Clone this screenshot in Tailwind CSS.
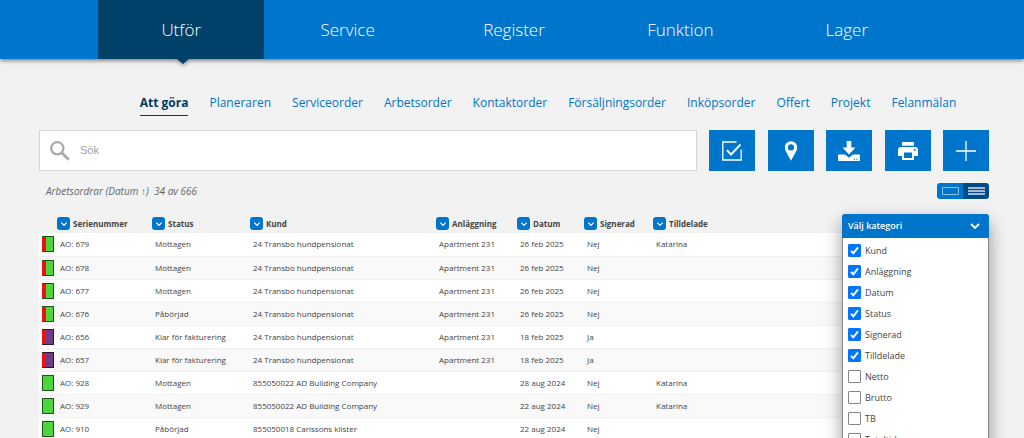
<!DOCTYPE html>
<html lang="sv">
<head>
<meta charset="utf-8">
<meta name="viewport" content="width=device-width, initial-scale=1">
<title>Arbetsordrar</title>
<script src="https://cdn.jsdelivr.net/npm/@tailwindcss/browser@4"></script>
</head>
<body class="h-screen overflow-hidden bg-[#f2f2f2] font-['Open_Sans',sans-serif] text-[#444]">
<svg class="hidden" aria-hidden="true">
  <symbol id="chev" viewBox="0 0 12 12"><path d="M2 4l4 4 4-4" fill="none" stroke="#fff" stroke-width="1.9"/></symbol>
</svg>

<header class="bg-[#0075cc] pl-1 shadow-[0_2px_4px_rgba(0,0,0,0.45)]">
  <nav class="mx-auto grid w-[832px] grid-cols-5 text-center text-[17px] leading-[59px] font-light text-white">
    <a href="#" class="relative bg-[#00416a]">Utför
      <svg class="absolute top-full left-1/2 -ml-1 h-[5px] w-3 drop-shadow-[0_2px_2px_rgba(0,0,0,0.35)]" viewBox="0 0 12 5"><path d="M0 0h12L6 5z" fill="#00416a"/></svg>
    </a>
    <a href="#">Service</a>
    <a href="#">Register</a>
    <a href="#">Funktion</a>
    <a href="#">Lager</a>
  </nav>
</header>

<nav class="mt-[35px] flex justify-center gap-[21px] pl-[72px] text-[12px] leading-[18px] font-medium text-[#0075cc]">
  <a href="#" class="border-b border-[#00416a] pb-[3px] font-bold text-[#003a61]">Att göra</a>
  <a href="#">Planeraren</a>
  <a href="#">Serviceorder</a>
  <a href="#">Arbetsorder</a>
  <a href="#">Kontaktorder</a>
  <a href="#">Försäljningsorder</a>
  <a href="#">Inköpsorder</a>
  <a href="#">Offert</a>
  <a href="#">Projekt</a>
  <a href="#">Felanmälan</a>
</nav>

<main class="pt-[14px] pr-[35px] pl-[39px]">
  <div class="flex gap-3">
    <label class="flex h-[41px] flex-1 items-center border border-[#d6d6d6] bg-white pl-2.5">
      <svg class="size-5" viewBox="0 0 20 20" fill="none" stroke="#a9a9a9"><circle cx="7.3" cy="7.3" r="6.1" stroke-width="2.2"/><path d="M12 12l6.8 6.8" stroke-width="2.8"/></svg>
      <input type="text" placeholder="Sök" aria-label="Sök" class="ml-2.5 flex-1 font-['Liberation_Sans',sans-serif] text-[11px] outline-none placeholder:text-[#a0a0a0]">
    </label>
    <div class="flex w-[280px] justify-between">
      <button aria-label="Markera" class="grid h-[41px] w-[46px] place-items-center bg-[#0075cc]">
        <svg class="size-5" viewBox="0 0 20 20" fill="none" stroke="#fff"><path d="M14.5 1H.8v18h18.4V8.5" stroke-width="1.3"/><path d="M5 9.2l4 4.3L18.5 3.5" stroke-width="1.9"/></svg>
      </button>
      <button aria-label="Karta" class="grid h-[41px] w-[46px] place-items-center bg-[#0075cc]">
        <svg class="size-5" viewBox="0 0 20 20"><path fill="#fff" fill-rule="evenodd" d="M10 .3a6.2 6.2 0 0 0-6.2 6.2c0 2.3 1.3 4.3 2.4 6.2L10 19.7l3.8-7c1.1-1.9 2.4-3.9 2.4-6.2A6.2 6.2 0 0 0 10 .3zm0 3a3.1 3.1 0 1 1 0 6.2 3.1 3.1 0 0 1 0-6.2z"/></svg>
      </button>
      <button aria-label="Ladda ner" class="grid h-[41px] w-[46px] place-items-center bg-[#0075cc]">
        <svg class="h-5 w-[22px]" viewBox="0 0 22 20" fill="#fff"><path d="M8.7 0h4.6v6.5h4.2L11 13.5 4.5 6.5h4.2z"/><path fill-rule="evenodd" d="M1 13.5h6l4 3.2 4-3.2h6c.6 0 1 .4 1 1V19c0 .6-.4 1-1 1H1c-.6 0-1-.4-1-1v-4.500c0-.6.4-1 1-1zm14.800 4v1.200H17v-1.200zm2.500 0v1.200h1.200v-1.200z"/></svg>
      </button>
      <button aria-label="Skriv ut" class="grid h-[41px] w-[46px] place-items-center bg-[#0075cc]">
        <svg class="h-[18px] w-5" viewBox="0 0 20 18"><path fill="#fff" fill-rule="evenodd" d="M4 0h12v3.8H4zM3 5h14a3 3 0 0 1 3 3v6h-4v4H4v-4H0V8a3 3 0 0 1 3-3zm3 5.500V16h8v-5.500zM16.700 7a1 1 0 1 0 0 2 1 1 0 0 0 0-2z"/></svg>
      </button>
      <button aria-label="Lägg till" class="grid h-[41px] w-[46px] place-items-center bg-[#0075cc]">
        <svg class="size-5" viewBox="0 0 20 20" stroke="#fff" stroke-width="1.3"><path d="M10 0v20M0 10h20"/></svg>
      </button>
    </div>
  </div>

  <div class="mt-3 flex items-center justify-between">
    <p class="pl-[7px] text-[10px] leading-4 text-[#666] italic">Arbetsordrar (Datum ↑)&nbsp; 34 av 666</p>
    <div class="flex h-4 overflow-hidden rounded-[3px]">
      <button aria-label="Kortvy" class="grid w-[26px] place-items-center bg-[#0075cc]"><svg class="h-2 w-[17px]" viewBox="0 0 17 8"><rect x=".5" y=".5" width="16" height="7" rx=".5" fill="none" stroke="#8cc4ee"/></svg></button>
      <button aria-label="Listvy" class="grid w-[26px] place-items-center bg-[#004a86]"><svg class="h-2 w-[17px]" viewBox="0 0 17 8" stroke="#d3e2ee" stroke-width="1.4"><path d="M0 1h17M0 4h17M0 7h17"/></svg></button>
    </div>
  </div>

  <div class="relative mt-[15px]">
    <table class="w-full table-fixed text-left text-[8px]">
      <colgroup><col class="w-[18px]"><col class="w-[95px]"><col class="w-[98px]"><col class="w-[186px]"><col class="w-[81px]"><col class="w-[67px]"><col class="w-[69px]"><col></colgroup>
      <thead>
        <tr id="head" class="h-[19px]"><th></th></tr>
      </thead>
      <tbody id="rows"></tbody>
    </table>

    <section class="absolute top-0 right-0 w-[147px] rounded-t-[3px] border border-[#888] bg-white pb-4 shadow-[0_8px_18px_rgba(0,0,0,0.4)]">
      <button class="-mx-px -mt-px flex h-6 w-[147px] items-center justify-between rounded-t-[3px] bg-[#0075cc] pr-2 pl-1.5 text-[9px] font-semibold text-white">Välj kategori<svg class="size-3"><use href="#chev"/></svg></button>
      <ul id="cats" class="pt-0.5 pl-[5px] text-[9px]"></ul>
    </section>
  </div>
</main>

<script>
const heads = ['Serienummer','Status','Kund','Anläggning','Datum','Signerad','Tilldelade'];
document.getElementById('head').innerHTML += heads.map(h =>
  `<th class="p-0"><div class="flex items-center gap-[3px]"><button aria-label="Sortera ${h}" class="grid size-[13px] place-items-center rounded-[3px] bg-[#0075cc]"><svg class="size-2"><use href="#chev"/></svg></button>${h}</div></th>`).join('');

const T = '24 Transbo hundpensionat', A = 'Apartment 231', B = '855050022 AD Building Company';
const rows = [
  ['rg','AO: 679','Mottagen',T,A,'26 feb 2025','Nej','Katarina'],
  ['rg','AO: 678','Mottagen',T,A,'26 feb 2025','Nej',''],
  ['rg','AO: 677','Mottagen',T,A,'26 feb 2025','Nej',''],
  ['rg','AO: 676','Påbörjad',T,A,'26 feb 2025','Nej',''],
  ['rp','AO: 656','Klar för fakturering',T,A,'18 feb 2025','Ja',''],
  ['rp','AO: 657','Klar för fakturering',T,A,'18 feb 2025','Ja',''],
  ['g','AO: 928','Mottagen',B,'','28 aug 2024','Nej','Katarina'],
  ['g','AO: 929','Mottagen',B,'','22 aug 2024','Nej','Katarina'],
  ['g','AO: 910','Påbörjad','855050018 Carlssons klister','','22 aug 2024','Nej','']
];
const swatch = {
  rg: 'border-l-0 bg-[#4cd63c]',
  rp: 'border-l-0 bg-[#6f3a86]',
  g: 'bg-[#4cd63c]'
};
document.getElementById('rows').innerHTML = rows.map(([s, ...c]) =>
  `<tr class="h-[23px] border-b border-[#f0f0f0] bg-white even:bg-[#f9f9f9]"><td class="p-0 pl-[3px]"><div class="flex h-4 w-3 border border-black/60 ${swatch[s]}">${s !== 'g' ? '<span class="w-1 bg-[#f01010]"></span>' : ''}</div></td>${c.map(t => `<td class="p-0 pl-[3px] whitespace-nowrap">${t}</td>`).join('')}</tr>`).join('');

const cats = ['Kund','Anläggning','Datum','Status','Signerad','Tilldelade','Netto','Brutto','TB','Totaltid'];
document.getElementById('cats').innerHTML = cats.map((c, i) =>
  `<li><label class="flex h-[21px] items-center gap-1"><span class="grid size-[13px]"><input type="checkbox" ${i < 6 ? 'checked' : ''} class="peer col-start-1 row-start-1 size-[13px] appearance-none rounded-[1px] border border-[#858585] bg-white checked:border-[#0075ff] checked:bg-[#0075ff]"><svg class="col-start-1 row-start-1 hidden size-[13px] peer-checked:block" viewBox="0 0 13 13"><path d="M3 6.9l2.3 2.4L10 3.4" fill="none" stroke="#fff" stroke-width="2"/></svg></span>${c}</label></li>`).join('');
</script>
</body>
</html>
